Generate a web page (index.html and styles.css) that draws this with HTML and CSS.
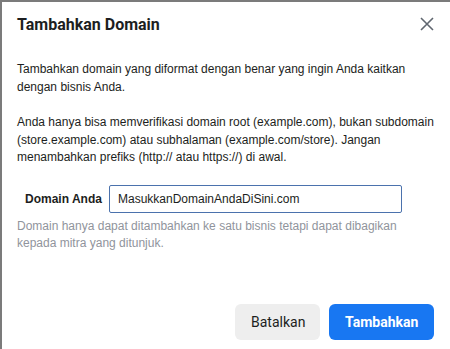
FILE: index.html
```html
<!DOCTYPE html>
<html>
<head>
<meta charset="utf-8">
<link rel="stylesheet" href="styles.css">
</head>
<body>
<div class="dialog">
  <div class="header">
    <h1 class="title">Tambahkan Domain</h1>
    <button class="close" aria-label="Tutup">
      <svg width="14" height="14" viewBox="0 0 14 14"><path d="M1 1L13 13M13 1L1 13" stroke="#606770" stroke-width="1.6" fill="none"/></svg>
    </button>
  </div>
  <div class="body">
    <p class="text">Tambahkan domain yang diformat dengan benar yang ingin Anda kaitkan dengan bisnis Anda.</p>
    <p class="text">Anda hanya bisa memverifikasi domain root (example.com), bukan subdomain (store.example.com) atau subhalaman (example.com/store). Jangan menambahkan prefiks (http:// atau https://) di awal.</p>
    <div class="field">
      <label class="label">Domain Anda</label>
      <div class="input">MasukkanDomainAndaDiSini.com</div>
    </div>
    <p class="hint">Domain hanya dapat ditambahkan ke satu bisnis tetapi dapat dibagikan kepada mitra yang ditunjuk.</p>
  </div>
  <div class="footer">
    <button class="btn btn-cancel">Batalkan</button>
    <button class="btn btn-primary">Tambahkan</button>
  </div>
</div>
</body>
</html>
```
FILE: styles.css
```css
* { box-sizing: border-box; }
html, body { margin: 0; padding: 0; background: #fff; }
body { width: 450px; height: 349px; overflow: hidden; }
.dialog {
  width: 450px;
  height: 349px;
  border-top: 2px solid #7b7b7b;
  border-left: 2px solid #7b7b7b;
  background: #fff;
  display: flex;
  flex-direction: column;
  font-family: "Liberation Sans", Arial, sans-serif;
}
.header {
  display: flex;
  align-items: center;
  justify-content: space-between;
  padding: 0 16px 2px 15px;
  height: 46px;
}
.title {
  margin: 0;
  font-family: Roboto, "Liberation Sans", sans-serif;
  font-weight: 700;
  font-size: 16px;
  color: #1c1e21;
}
.close {
  border: 0;
  background: none;
  padding: 0;
  width: 14px;
  height: 14px;
  display: flex;
}
.body {
  padding: 13px 15px 0 15px;
  flex: 1;
}
.text {
  margin: 0 0 18px 0;
  font-size: 12px;
  line-height: 17.5px;
  color: #1c1e21;
}
.field {
  display: flex;
  align-items: center;
  padding-left: 8px;
  margin-top: 15px;
}
.label {
  font-size: 12px;
  font-weight: 700;
  color: #1c1e21;
  width: 84px;
}
.input {
  width: 293px;
  height: 28px;
  border: 1px solid #4b72ad;
  border-radius: 2px;
  padding: 0 8px;
  display: flex;
  align-items: center;
  font-size: 12px;
  color: #1c1e21;
}
.hint {
  margin: 5px 0 0 0;
  font-size: 12px;
  line-height: 17.5px;
  color: #90949c;
}
.footer {
  display: flex;
  justify-content: flex-end;
  gap: 9px;
  padding: 0 16px 9px 0;
}
.btn {
  height: 36px;
  border: 0;
  border-radius: 6px;
  font-family: Roboto, "Liberation Sans", sans-serif;
  font-size: 14px;
  padding: 0 16px;
}
.btn-cancel { background: #eeeeee; color: #1c1e21; width: 85px; }
.btn-primary { background: #1877f2; color: #fff; font-weight: 700; width: 105px; }
```
